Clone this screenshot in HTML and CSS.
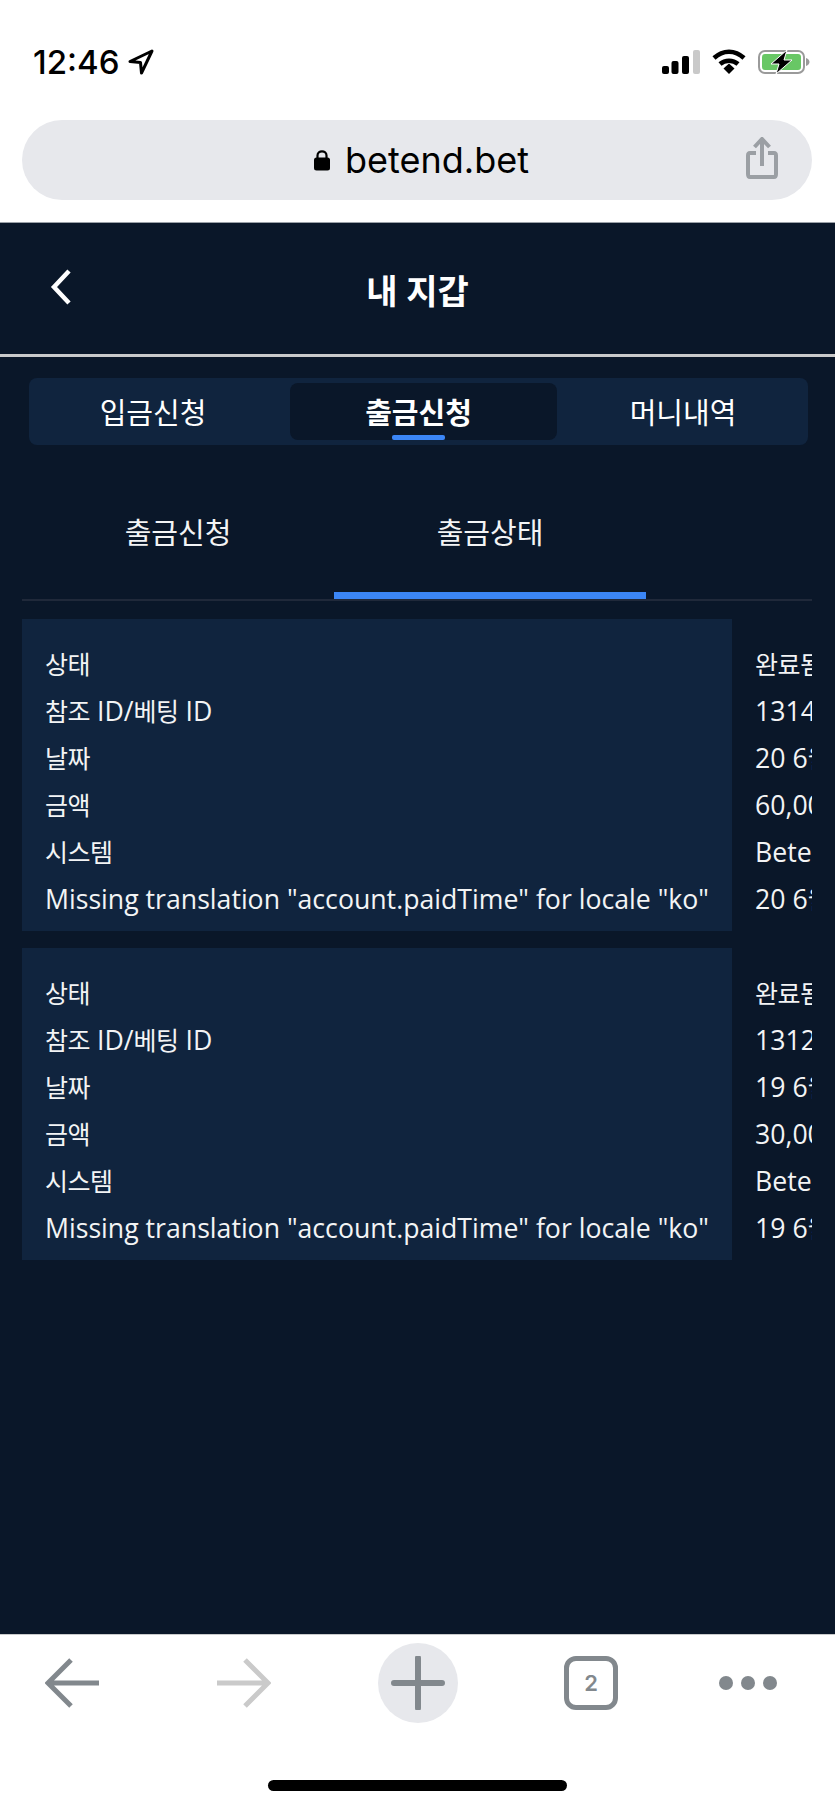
FILE: index.html
```html
<!doctype html>
<html lang="ko">
  <head>
    <meta charset="UTF-8" />
    <meta name="viewport" content="width=device-width, initial-scale=1.0" />
    <title>내 지갑 - betend.bet</title>
    <link rel="stylesheet" href="styles.css">
  </head>
  <body>
    <div class="phone">
      <!-- 상태 바 -->
      <div class="status-bar">
        <div class="status-time">
          <span>12:46</span>
          <svg class="location-icon" viewBox="0 0 26 26" width="26" height="26">
            <path d="M24 2 L2 12.5 L12.5 13.5 L13.5 24 Z" fill="none" stroke="#000" stroke-width="3" stroke-linejoin="round" />
          </svg>
        </div>
        <div class="status-icons">
          <svg viewBox="0 0 38 24" width="38" height="24">
            <rect x="0" y="16" width="7" height="8" rx="2" fill="#000" />
            <rect x="9.500" y="11" width="7" height="13" rx="2" fill="#000" />
            <rect x="20" y="6" width="7" height="18" rx="2" fill="#000" />
            <rect x="31" y="0" width="7" height="24" rx="2" fill="#c9c9c9" />
          </svg>
          <svg viewBox="0 0 34 25" width="34" height="25">
            <path d="M2 9 C11 0.500 23 0.500 32 9" fill="none" stroke="#000" stroke-width="4.500" />
            <path d="M8 15 C13 10.500 21 10.500 26 15" fill="none" stroke="#000" stroke-width="4.500" />
            <path d="M11.500 19.500 L17 14.500 L22.500 19.500 L17 25 Z" fill="#000" />
          </svg>
          <svg class="battery-icon" viewBox="0 0 52 24" width="52" height="24">
            <rect x="1" y="1" width="45" height="22" rx="6" fill="#fff" stroke="#9a9a9a" stroke-width="2" />
            <rect x="4" y="4" width="39" height="16" rx="3" fill="#68c765" />
            <path d="M48 8 C50.500 9 51.500 10.500 51.500 12 C51.500 13.500 50.500 15 48 16 Z" fill="#9a9a9a" />
            <path d="M29 0 L13 14 L21 14 L18 24 L34 10 L26 10 Z" fill="#000" stroke="#fff" stroke-width="1" />
          </svg>
        </div>
      </div>

      <!-- 주소창 -->
      <div class="address-wrap">
        <div class="address-bar">
          <svg class="lock-icon" viewBox="0 0 18 22" width="18" height="22">
            <path d="M4.500 10 V6.500 C4.500 1 13.500 1 13.500 6.500 V10" fill="none" stroke="#000" stroke-width="2.200" />
            <rect x="1" y="8.500" width="16" height="13" rx="2.500" fill="#000" />
          </svg>
          <span class="address-text">betend.bet</span>
          <svg class="share-icon" viewBox="0 0 32 42" width="32" height="42">
            <path d="M10 16 H4 C2.500 16 2 17 2 18.500 V37 C2 38.800 2.500 40 4 40 H28 C29.500 40 30 38.800 30 37 V18.500 C30 17 29.500 16 28 16 H22" fill="none" stroke="#9b9fa4" stroke-width="4" />
            <path d="M16 29 V3 M8.500 10 L16 2 L23.500 10" fill="none" stroke="#9b9fa4" stroke-width="4" />
          </svg>
        </div>
      </div>

      <!-- 지갑 화면 -->
      <main class="wallet">
        <header class="wallet-header">
          <svg class="back-icon" viewBox="0 0 24 38" width="24" height="38">
            <path d="M20 3 L5 19 L20 35" fill="none" stroke="#fff" stroke-width="4.500" />
          </svg>
          <h1>내 지갑</h1>
        </header>

        <nav class="main-tabs">
          <a class="main-tab">입금신청</a>
          <a class="main-tab active">출금신청</a>
          <a class="main-tab">머니내역</a>
        </nav>

        <nav class="sub-tabs">
          <a class="sub-tab">출금신청</a>
          <a class="sub-tab active">출금상태</a>
        </nav>

        <div class="history">
          <div class="history-item">
            <dl class="labels">
              <dt><span class="ko">상태</span></dt>
              <dt><span class="ko">참조</span> ID/<span class="ko">베팅</span> ID</dt>
              <dt><span class="ko">날짜</span></dt>
              <dt><span class="ko">금액</span></dt>
              <dt><span class="ko">시스템</span></dt>
              <dt>Missing translation "account.paidTime" for locale "ko"</dt>
            </dl>
            <div class="values">
              <div><span class="ko">완료됨</span></div>
              <div>131482</div>
              <div>20 6<span class="ko">월</span></div>
              <div>60,000</div>
              <div>Betend</div>
              <div>20 6<span class="ko">월</span></div>
            </div>
          </div>

          <div class="history-item">
            <dl class="labels">
              <dt><span class="ko">상태</span></dt>
              <dt><span class="ko">참조</span> ID/<span class="ko">베팅</span> ID</dt>
              <dt><span class="ko">날짜</span></dt>
              <dt><span class="ko">금액</span></dt>
              <dt><span class="ko">시스템</span></dt>
              <dt>Missing translation "account.paidTime" for locale "ko"</dt>
            </dl>
            <div class="values">
              <div><span class="ko">완료됨</span></div>
              <div>131257</div>
              <div>19 6<span class="ko">월</span></div>
              <div>30,000</div>
              <div>Betend</div>
              <div>19 6<span class="ko">월</span></div>
            </div>
          </div>
        </div>
      </main>

      <!-- 브라우저 툴바 -->
      <footer class="toolbar">
        <div class="toolbar-icons">
          <svg viewBox="0 0 54 50" width="54" height="50">
            <path d="M54 25 H4 M26 2 L3 25 L26 48" fill="none" stroke="#82888d" stroke-width="5" />
          </svg>
          <svg viewBox="0 0 54 50" width="54" height="50">
            <path d="M0 25 H50 M28 2 L51 25 L28 48" fill="none" stroke="#cacaca" stroke-width="5" />
          </svg>
          <div class="new-tab">
            <svg viewBox="0 0 54 54" width="54" height="54">
              <path d="M27 2 V52 M3 27 H51" fill="none" stroke="#82888d" stroke-width="6" stroke-linecap="round" />
            </svg>
          </div>
          <div class="tab-count">2</div>
          <div class="more">
            <span></span><span></span><span></span>
          </div>
        </div>
        <div class="home-bar"></div>
      </footer>
    </div>
  </body>
</html>
```

FILE: styles.css
```css
* {
  margin: 0;
  padding: 0;
  box-sizing: border-box;
}

body {
  font-family: 'Open Sans', 'Noto Sans CJK KR', sans-serif;
  background: white;
}

.phone {
  width: 835px;
  height: 1808px;
  display: flex;
  flex-direction: column;
  overflow: hidden;
}

.status-bar {
  height: 120px;
  display: flex;
  justify-content: space-between;
  align-items: flex-start;
  padding: 44px 25px 0 33px;
}

.status-time {
  display: flex;
  align-items: center;
  gap: 9px;
  font-family: 'Inter', 'Liberation Sans', sans-serif;
  font-size: 33px;
  font-weight: 500;
  line-height: 36px;
  color: black;
}

.status-icons {
  display: flex;
  align-items: center;
  gap: 12px;
  padding-top: 5px;
}

.address-wrap {
  height: 102px;
  padding: 0 23px 0 22px;
}

.address-bar {
  position: relative;
  height: 80px;
  border-radius: 40px;
  background: #e7e8ec;
  display: flex;
  align-items: center;
  justify-content: center;
  gap: 14px;
  padding-left: 8px;
}

.address-text {
  font-family: 'Inter', 'Liberation Sans', sans-serif;
  font-size: 36px;
  color: black;
}

.share-icon {
  position: absolute;
  right: 34px;
  top: 17px;
}

.wallet {
  flex: 1;
  background: #0a1729;
  border-top: 1px solid #9ba1a8;
}

.wallet-header {
  position: relative;
  height: 134px;
  border-bottom: 3px solid #c9cacb;
  display: flex;
  justify-content: center;
  padding-top: 48px;
}

.wallet-header h1 {
  font-size: 34px;
  font-weight: 700;
  line-height: 40px;
  color: white;
}

.back-icon {
  position: absolute;
  left: 49px;
  top: 45px;
}

.main-tabs {
  margin: 21px 27px 0 29px;
  height: 67px;
  padding: 5px;
  border-radius: 8px;
  background: #10243e;
  display: grid;
  grid-template-columns: 256px 267px 1fr;
}

.main-tab {
  position: relative;
  display: flex;
  align-items: center;
  justify-content: center;
  font-size: 29px;
  color: white;
  padding-bottom: 2px;
}

.main-tab:first-child {
  padding-right: 18px;
}

.main-tab:last-child {
  padding-left: 6px;
}

.main-tab.active {
  background: #0a1729;
  border-radius: 8px;
  font-weight: 700;
  padding-right: 10px;
}

/* 활성 탭 아래 파란 막대 */
.main-tab.active::after {
  content: '';
  position: absolute;
  left: 102px;
  bottom: 0;
  width: 53px;
  height: 5px;
  border-radius: 2px;
  background: #3b86f6;
}

.sub-tabs {
  margin: 0 23px 0 22px;
  padding-top: 36px;
  height: 156px;
  border-bottom: 2px solid #20293a;
  display: grid;
  grid-template-columns: 312px 312px;
}

.sub-tab {
  display: flex;
  justify-content: center;
  align-items: flex-start;
  padding-top: 32px;
  font-size: 29px;
  line-height: 40px;
  color: #f3f4f5;
  height: 118px;
}

.sub-tab.active {
  border-bottom: 7px solid #3b86f6;
}

.history {
  margin: 18px 23px 0 22px;
  display: flex;
  flex-direction: column;
  gap: 17px;
  overflow: hidden;
}

.history-item {
  display: flex;
  font-size: 26.67px;
  line-height: 47px;
  color: #f3f4f5;
  white-space: nowrap;
}

/* 한글은 라틴 글자보다 좁게 */
.ko {
  font-size: 25px;
  letter-spacing: -0.5px;
}

.labels {
  flex: none;
  width: 710px;
  height: 312px;
  padding: 21px 23px;
  background: #10243e;
}

.labels dt {
  height: 47px;
}

.values {
  padding: 21px 0 0 23px;
}

.values div {
  height: 47px;
}

.toolbar {
  height: 174px;
  background: white;
  border-top: 1px solid #c9cacb;
  position: relative;
}

.toolbar-icons {
  height: 96px;
  padding-left: 45px;
  display: grid;
  grid-template-columns: 172px 161px 186px 155px 58px;
  align-items: center;
}

.new-tab {
  width: 80px;
  height: 80px;
  border-radius: 50%;
  background: #e7e8ec;
  display: flex;
  align-items: center;
  justify-content: center;
}

.tab-count {
  width: 54px;
  height: 54px;
  border: 5px solid #82888d;
  border-radius: 12px;
  display: flex;
  align-items: center;
  justify-content: center;
  font-family: 'Inter', 'Liberation Sans', sans-serif;
  font-size: 22px;
  font-weight: 600;
  color: #82888d;
}

.more {
  display: flex;
  gap: 8px;
}

.more span {
  width: 14px;
  height: 14px;
  border-radius: 50%;
  background: #82888d;
}

.home-bar {
  position: absolute;
  left: 268px;
  top: 145px;
  width: 299px;
  height: 11px;
  border-radius: 6px;
  background: black;
}
```
